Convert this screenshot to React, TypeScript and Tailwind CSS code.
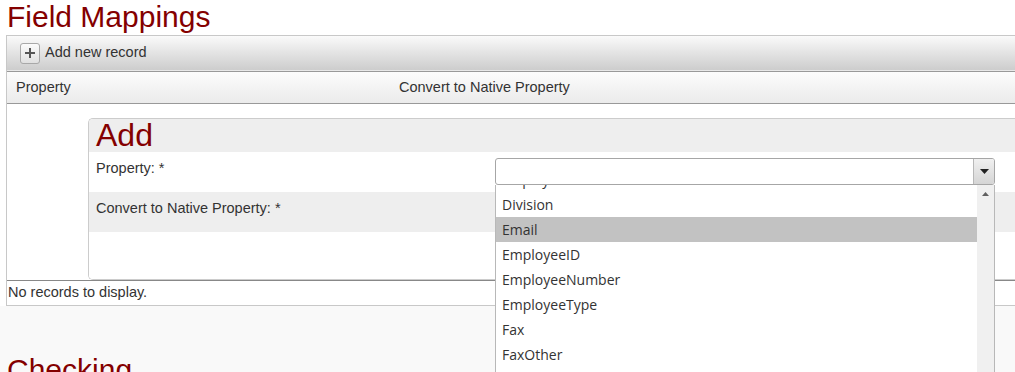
const OPTIONS = [
  'DisplayName',
  'Division',
  'Email',
  'EmployeeID',
  'EmployeeNumber',
  'EmployeeType',
  'Fax',
  'FaxOther',
  'FirstName',
];

function PropertyCombo() {
  return (
    <div className="relative w-[500px]">
      <div className="flex h-[27px] rounded-[3px] border border-[#a6a6a6] bg-white">
        <div className="flex-1" />
        <div className="flex w-[21px] items-center justify-center rounded-r-[2px] border-l border-[#b8b8b8] bg-linear-to-b from-[#f0f0f0] to-[#d5d5d5]">
          <svg width="9" height="5" viewBox="0 0 9 5">
            <path d="M0 0 L9 0 L4.5 5 Z" fill="#222" />
          </svg>
        </div>
      </div>

      {/* open list */}
      <div className="absolute left-0 top-full z-10 flex h-[220px] w-[500px] border-x border-[#b8b8b8] bg-white">
        <div className="flex-1 overflow-hidden">
          <div className="-mt-[18px] font-['Open_Sans',sans-serif] text-[14px] text-[#333]">
            {OPTIONS.map((opt) => (
              <div
                key={opt}
                className={
                  opt === 'Email'
                    ? 'h-[25px] bg-[#c2c2c2] pl-[6px] leading-[25px]'
                    : 'h-[25px] pl-[6px] leading-[25px]'
                }
              >
                {opt}
              </div>
            ))}
          </div>
        </div>
        <div className="flex w-[17px] justify-center bg-[#f0f0f0] pt-[7px]">
          <svg width="7" height="4" viewBox="0 0 7 4">
            <path d="M0 4 L7 4 L3.5 0 Z" fill="#606060" />
          </svg>
        </div>
      </div>
    </div>
  );
}

export default function App() {
  return (
    <div className="flex h-[372px] w-[1015px] flex-col overflow-hidden bg-white font-['Liberation_Sans',Arial,sans-serif] text-[#333]">
      <h1 className="h-[35px] shrink-0 pl-[7px] pt-[1px] text-[30px] leading-[32px] text-[#840000]">
        Field Mappings
      </h1>

      <div className="ml-[6px] border-y border-l border-[#c8c8c8]">
        {/* toolbar */}
        <div className="flex h-[35px] items-center gap-[5px] border-b border-[#e8e8e8] bg-linear-to-b from-[#fafafa] to-[#cdcdcd] pl-[13px] text-[14.5px]">
          <button
            type="button"
            className="flex h-[21px] w-[20px] items-center justify-center rounded-[3px] border border-[#a8a8a8] bg-linear-to-b from-[#fbfbfb] to-[#e0e0e0]"
          >
            <svg width="10" height="10" viewBox="0 0 10 10">
              <path d="M5 0 V10 M0 5 H10" stroke="#555" strokeWidth="2" />
            </svg>
          </button>
          <span>Add new record</span>
        </div>

        {/* header */}
        <div className="flex h-[33px] items-center border-y border-[#999] bg-linear-to-b from-[#fcfcfc] to-[#ebebeb] text-[14.5px]">
          <div className="w-[383px] pl-[9px]">Property</div>
          <div className="pl-[9px]">Convert to Native Property</div>
        </div>

        {/* edit form */}
        <div className="pl-[81px] pt-[14px]">
          <div className="rounded-l-[5px] border border-r-0 border-[#ccc]">
            <div className="h-[33px] rounded-tl-[4px] bg-[#eee] pl-[7px] text-[32px] leading-[33px] text-[#840000]">
              Add
            </div>
            <div className="flex h-[40px] bg-white text-[14.5px]">
              <div className="w-[406px] pl-[7px] pt-[6px] leading-[20px]">Property: *</div>
              <div className="pt-[6px]">
                <PropertyCombo />
              </div>
            </div>
            <div className="h-[40px] bg-[#eee] pl-[7px] pt-[6px] text-[14.5px] leading-[20px]">
              Convert to Native Property: *
            </div>
            <div className="h-[47px] rounded-bl-[4px] bg-white" />
          </div>
        </div>

        <div className="flex h-[25px] items-center border-t border-[#888] pl-[1px] text-[14.5px]">
          No records to display.
        </div>
      </div>

      <div className="flex-1 bg-[#f9f9f9] pl-[7px] pt-[48px]">
        <h2 className="text-[30px] leading-[32px] text-[#840000]">Checking</h2>
      </div>
    </div>
  );
}
